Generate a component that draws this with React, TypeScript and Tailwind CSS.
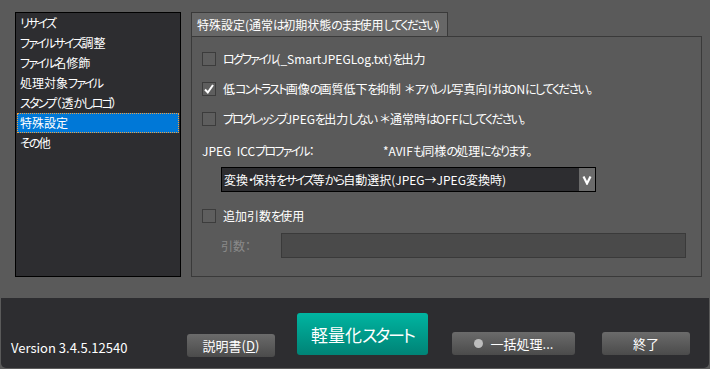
import React from 'react';

const menuItems = ['リサイズ', 'ファイルサイズ調整', 'ファイル名修飾', '処理対象ファイル', 'スタンプ（透かしロゴ）', '特殊設定', 'その他'];

// kana runs get tightened so the Gothic font comes close to the narrow UI face
const runRe = /([\u3041-\u30ff]+)|([^\u3041-\u30ff]+)/g;

const J: React.FC<{ text: string }> = ({ text }) => {
  const parts: React.ReactNode[] = [];
  let m: RegExpExecArray | null;
  let i = 0;
  runRe.lastIndex = 0;
  while ((m = runRe.exec(text)) !== null) {
    if (m[1]) parts.push(<span key={i++} className="tracking-[-1.8px]">{m[1]}</span>);
    else parts.push(<span key={i++}>{m[2]}</span>);
  }
  return <>{parts}</>;
};

const Checkbox: React.FC<{ checked?: boolean; label: string; note?: string }> = ({ checked, label, note }) => (
  <div className="flex items-center h-[16px]">
    <div className="w-[14px] h-[14px] border border-[#3c3c3c] bg-[#5e5e5e] flex items-center justify-center shrink-0">
      {checked && (
        <svg width="12" height="12" viewBox="0 0 12 12">
          <path d="M2 6.5 L4.8 9.5 L10 2" stroke="#fff" strokeWidth="2" fill="none" />
        </svg>
      )}
    </div>
    <span className="ml-[7px] text-white whitespace-nowrap"><J text={label} /></span>
    {note && <span className="ml-[4px] text-white whitespace-nowrap"><J text={note} /></span>}
  </div>
);

const GrayButton: React.FC<{ className?: string; children: React.ReactNode }> = ({ className, children }) => (
  <button className={`h-[23px] rounded-[3px] bg-gradient-to-b from-[#6b6b6b] to-[#4b4b4b] text-white text-[13px] flex items-center justify-center ${className ?? ''}`}>
    {children}
  </button>
);

const App: React.FC = () => {
  return (
    <div className="w-[710px] h-[369px] bg-[#5a5a5a] flex flex-col text-[12px] leading-none font-['Noto_Sans_CJK_JP'] [font-feature-settings:'palt']">
      <div className="flex pt-[12px] pl-[15px] h-[277px]">
        {/* left menu */}
        <div className="w-[166px] h-[265px] border border-black bg-[#2d2d30] flex flex-col px-[1px]">
          {menuItems.map((item, i) => (
            <div
              key={item}
              className={`h-[20px] flex items-center text-white whitespace-nowrap ${i === 5 ? 'bg-[#0078d7] border border-dotted border-[#f0a040] pl-[2px]' : 'pl-[3px]'}`}
            >
              <J text={item} />
            </div>
          ))}
        </div>

        {/* right panel */}
        <div className="ml-[10px] w-[511px] flex flex-col">
          <div className="w-[257px] h-[24px] bg-[#676767] border border-b-0 border-[#3a3a3a] flex items-center pl-[5px] text-white whitespace-nowrap">
            <J text="特殊設定(通常は初期状態のまま使用してください)" />
          </div>
          <div className="flex-1 border border-[#3a3a3a] flex flex-col pl-[10px]">
            <div className="mt-[14px]">
              <Checkbox label="ログファイル(_SmartJPEGLog.txt)を出力" />
            </div>
            <div className="mt-[14px]">
              <Checkbox checked label="低コントラスト画像の画質低下を抑制" note="＊アパレル写真向けはONにしてください。" />
            </div>
            <div className="mt-[14px]">
              <Checkbox label="プログレッシブJPEGを出力しない" note="＊通常時はOFFにしてください。" />
            </div>
            <div className="mt-[16px] h-[16px] flex items-center text-white">
              <span className="w-[181px] whitespace-nowrap"><J text={'JPEG\u00a0\u00a0ICCプロファイル：'} /></span>
              <span className="whitespace-nowrap"><J text="*AVIFも同様の処理になります。" /></span>
            </div>
            <div className="mt-[8px] ml-[19px] w-[375px] h-[25px] border border-black bg-[#2d2d30] flex items-center">
              <span className="flex-1 pl-[2px] text-white whitespace-nowrap">
                <J text="変換・保持をサイズ等から自動選択(JPEG→JPEG変換時)" />
              </span>
              <div className="w-[16px] h-full bg-[#6b6b6b] flex items-center justify-center">
                <svg width="10" height="10" viewBox="0 0 10 10">
                  <path d="M1.5 1.5 L5 8.5 L8.5 1.5" stroke="#fff" strokeWidth="2.2" fill="none" />
                </svg>
              </div>
            </div>
            <div className="mt-[16px]">
              <Checkbox label="追加引数を使用" />
            </div>
            <div className="mt-[9px] flex items-center">
              <span className="ml-[19px] w-[60px] text-[#8a8a8a]">引数：</span>
              <div className="w-[405px] h-[25px] border border-[#3a3a3a] bg-[#4a4a4a]" />
            </div>
          </div>
        </div>
      </div>

      <div className="mt-[21px] mx-[1px] h-[70px] bg-[#2d2d30] rounded-b-[5px] flex items-end pb-[13px]">
        <div className="w-[186px] pl-[10px] pb-[1px] text-[13px] text-white">Version 3.4.5.12540</div>
        <GrayButton className="w-[88px] mb-[-2px]">
          説明書(<span className="underline">D</span>)
        </GrayButton>
        <button className="ml-[22px] w-[131px] h-[42px] rounded-[3px] bg-gradient-to-b from-[#00b5a1] to-[#008376] text-white text-[17px] flex items-center justify-center">
          軽量化<span className="tracking-[-2px]">スタート</span>
        </button>
        <GrayButton className="ml-[24px] w-[123px]">
          <span className="w-[9px] h-[9px] rounded-full bg-[#bdbdbd] mr-[8px]" />
          一括処理...
        </GrayButton>
        <GrayButton className="ml-[27px] w-[88px]">終了</GrayButton>
      </div>
    </div>
  );
};

export default App;
